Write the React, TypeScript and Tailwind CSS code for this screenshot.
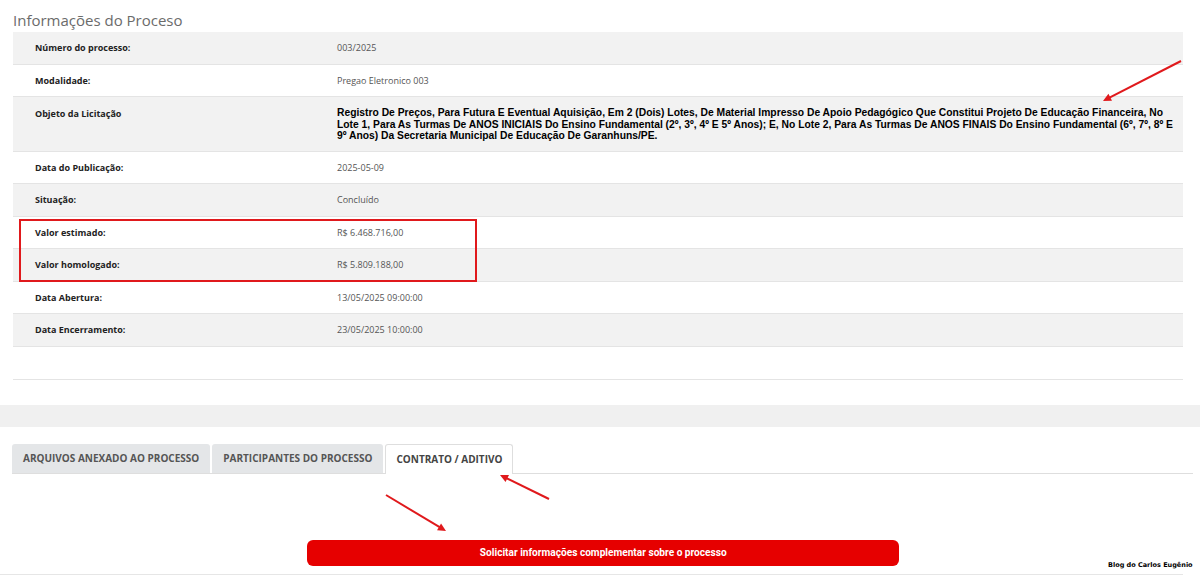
import React from "react";

type Row = { label: string; value: React.ReactNode; rich?: boolean };

const rows: Row[] = [
  { label: "Número do processo:", value: "003/2025" },
  { label: "Modalidade:", value: "Pregao Eletronico  003" },
  {
    label: "Objeto da Licitação",
    rich: true,
    value:
      "Registro De Preços, Para Futura E Eventual Aquisição, Em 2 (Dois) Lotes, De Material Impresso De Apoio Pedagógico Que Constitui Projeto De Educação Financeira, No Lote 1, Para As Turmas De ANOS INICIAIS Do Ensino Fundamental (2º, 3º, 4º E 5º Anos); E, No Lote 2, Para As Turmas De ANOS FINAIS Do Ensino Fundamental (6º, 7º, 8º E 9º Anos) Da Secretaria Municipal De Educação De Garanhuns/PE.",
  },
  { label: "Data do Publicação:", value: "2025-05-09" },
  { label: "Situação:", value: "Concluído" },
  { label: "Valor estimado:", value: "R$ 6.468.716,00" },
  { label: "Valor homologado:", value: "R$ 5.809.188,00" },
  { label: "Data Abertura:", value: "13/05/2025 09:00:00" },
  { label: "Data Encerramento:", value: "23/05/2025 10:00:00" },
];

const tabs = ["ARQUIVOS ANEXADO AO PROCESSO", "PARTICIPANTES DO PROCESSO", "CONTRATO / ADITIVO"];

function Arrow({ x1, y1, x2, y2 }: { x1: number; y1: number; x2: number; y2: number }) {
  const a = Math.atan2(y2 - y1, x2 - x1);
  const L = 9;
  const w = 0.45;
  const p1 = `${x2 - L * Math.cos(a - w)},${y2 - L * Math.sin(a - w)}`;
  const p2 = `${x2 - L * Math.cos(a + w)},${y2 - L * Math.sin(a + w)}`;
  return (
    <g>
      <line x1={x1} y1={y1} x2={x2 - 4 * Math.cos(a)} y2={y2 - 4 * Math.sin(a)} stroke="#e0191c" strokeWidth={2} />
      <polygon points={`${x2},${y2} ${p1} ${p2}`} fill="#e0191c" />
    </g>
  );
}

export default function App() {
  return (
    <div className="relative w-full h-[582px] overflow-hidden bg-white font-['Open_Sans',sans-serif]">
      <h1 className="pl-[13px] pt-[10px] h-[32px] text-[15px] leading-[20px] text-[#6b6b6b] font-normal">
        Informações do Proceso
      </h1>

      {/* tabela de informações */}
      <div className="mx-[13px] w-[1170px]">
        {rows.map((r, i) => (
          <div
            key={r.label}
            className={`flex items-start border-b border-[#e4e4e4] ${i % 2 === 0 ? "bg-[#f2f2f2]" : "bg-white"}`}
          >
            <div
              className={`w-[324px] shrink-0 pl-[22px] text-[9px] font-bold text-[#222] ${
                r.rich ? "pt-[11px] leading-[11px]" : "py-[10px] leading-[11.5px]"
              }`}
            >
              {r.label}
            </div>
            {r.rich ? (
              <div className="flex-1 pr-[10px] pt-[10px] pb-[9px] font-['Liberation_Sans',Arial,sans-serif] text-[10.3px] leading-[11.6px] font-bold text-black">
                {r.value}
              </div>
            ) : (
              <div className="flex-1 py-[10px] text-[9px] leading-[11.5px] text-[#555]">{r.value}</div>
            )}
          </div>
        ))}
        <div className="h-[33px] border-b border-[#e4e4e4]" />
      </div>

      <div className="mt-[25px] h-[22px] bg-[#f0f0f0]" />

      {/* abas */}
      <div className="mt-[17px] ml-[12px] w-[1181px] flex items-end border-b border-[#dedede] h-[30px]">
        {tabs.map((t, i) => (
          <div
            key={t}
            className={
              i === 2
                ? "h-[30px] px-[10px] mb-[-1px] flex items-center bg-white border border-b-0 border-[#dedede] rounded-t-[3px] text-[10px] font-bold text-[#444]"
                : "h-[29px] px-[11px] mr-[2px] flex items-center bg-[#e4e6e8] rounded-t-[3px] text-[10px] font-bold text-[#555]"
            }
          >
            {t}
          </div>
        ))}
      </div>

      <div className="mt-[66px] ml-[307px] w-[592px] h-[26px] rounded-[6px] bg-[#e60000] flex items-center justify-center">
        <span className="inline-block scale-x-[0.88] font-['Roboto',sans-serif] font-bold text-[11.5px] text-white whitespace-nowrap">
          Solicitar informações complementar sobre o processo
        </span>
      </div>

      <div className="mt-[8px] w-[1183px] border-b border-[#e6e6e6]" />

      {/* marca d'água */}
      <div className="absolute left-[1108px] top-[561px] font-['DejaVu_Sans',sans-serif] font-bold text-[6.5px] text-black">
        Blog do Carlos Eugênio
      </div>

      {/* destaque em vermelho */}
      <div className="absolute left-[19px] top-[219px] w-[458px] h-[63px] border-2 border-[#e0191c]" />

      <svg className="absolute inset-0 pointer-events-none" width={1200} height={582}>
        <Arrow x1={1181} y1={61} x2={1103} y2={101} />
        <Arrow x1={549} y1={499} x2={500} y2={475} />
        <Arrow x1={386} y1={495} x2={446} y2={531} />
      </svg>
    </div>
  );
}
